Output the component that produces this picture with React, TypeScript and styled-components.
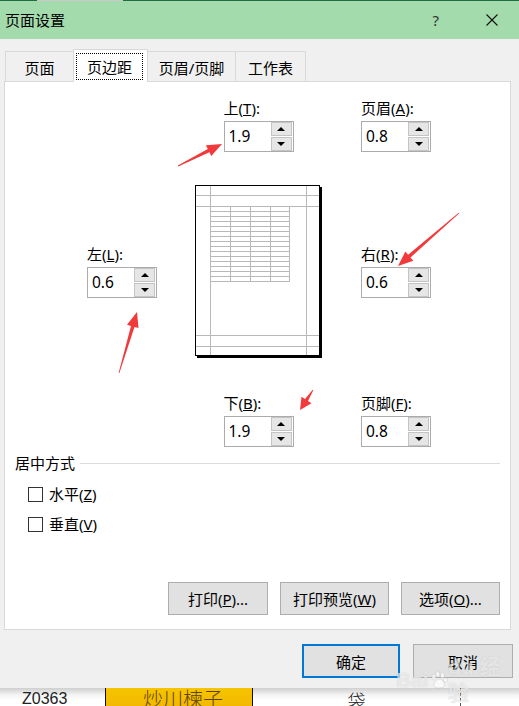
import styled, { createGlobalStyle, css } from "styled-components";

const GlobalStyle = createGlobalStyle`
  html, body { margin: 0; padding: 0; background: #fff; }
  body { font-family: "Noto Sans", "Noto Sans CJK SC", sans-serif; color: #000; }
  * { box-sizing: border-box; }
`;

type Side = "up" | "down";

const arrows = [
  { from: [178, 166], to: [222, 144] },
  { from: [119, 373], to: [137, 312] },
  { from: [459, 213], to: [398, 266] },
  { from: [313, 390], to: [300, 410] },
];

// tapered shaft + triangle head, like a marker arrow
const arrowPoints = (x1: number, y1: number, x2: number, y2: number) => {
  const dx = x2 - x1;
  const dy = y2 - y1;
  const len = Math.hypot(dx, dy);
  const ux = dx / len;
  const uy = dy / len;
  const nx = -uy;
  const ny = ux;
  const head = Math.min(15, len * 0.5);
  const bx = x2 - ux * head;
  const by = y2 - uy * head;
  const p = (x: number, y: number) => `${x.toFixed(1)},${y.toFixed(1)}`;
  return [
    p(x1 + nx * 0.4, y1 + ny * 0.4),
    p(bx + nx * 1.8, by + ny * 1.8),
    p(bx + nx * 6, by + ny * 6),
    p(x2, y2),
    p(bx - nx * 6, by - ny * 6),
    p(bx - nx * 1.8, by - ny * 1.8),
    p(x1 - nx * 0.4, y1 - ny * 0.4),
  ].join(" ");
};

const fields = {
  top: { label: "上", key: "T", value: "1.9" },
  header: { label: "页眉", key: "A", value: "0.8" },
  left: { label: "左", key: "L", value: "0.6" },
  right: { label: "右", key: "R", value: "0.6" },
  bottom: { label: "下", key: "B", value: "1.9" },
  footer: { label: "页脚", key: "F", value: "0.8" },
};

const Spin = ({ label, hotkey, value }: { label: string; hotkey: string; value: string }) => (
  <>
    <FieldLabel>
      {label}(<u>{hotkey}</u>):
    </FieldLabel>
    <SpinBox>
      <SpinValue>{value}</SpinValue>
      <Spinner>
        <SpinButton>
          <Tri $side="up" />
        </SpinButton>
        <SpinButton>
          <Tri $side="down" />
        </SpinButton>
      </Spinner>
    </SpinBox>
  </>
);

const PagePreview = () => {
  const rows = Array.from({ length: 16 }, (_, i) => 20 + i * 5);
  return (
    <Page>
      <svg width="123" height="169" viewBox="0 0 123 169" shapeRendering="crispEdges">
        <g stroke="#b8b8b8" strokeWidth="1">
          <line x1="14.5" y1="0" x2="14.5" y2="169" />
          <line x1="110.5" y1="0" x2="110.5" y2="169" />
          <line x1="0" y1="9.5" x2="123" y2="9.5" />
          <line x1="0" y1="20.5" x2="123" y2="20.5" />
          <line x1="0" y1="149.5" x2="123" y2="149.5" />
          <line x1="0" y1="160.5" x2="123" y2="160.5" />
          {rows.map((y) => (
            <line key={y} x1="14.5" y1={y + 0.5} x2="94" y2={y + 0.5} />
          ))}
          {[34.5, 54.5, 74.5, 93.5].map((x) => (
            <line key={x} x1={x} y1="20" x2={x} y2="96" />
          ))}
        </g>
      </svg>
    </Page>
  );
};

const App = () => {
  return (
    <Screen>
      <GlobalStyle />
      <TopEdge />
      <Dialog>
        <TitleBar>
          <Title>页面设置</Title>
          <HelpGlyph>?</HelpGlyph>
          <CloseIcon width="12" height="12" viewBox="0 0 12 12">
            <path d="M0.5 0.5 L11.5 11.5 M11.5 0.5 L0.5 11.5" stroke="#111" strokeWidth="1.1" fill="none" />
          </CloseIcon>
        </TitleBar>

        <Body>
          <Tabs>
            <Tab $w={69}>
              <TabText>页面</TabText>
            </Tab>
            <Tab $w={75} $active>
              <TabText $focus>页边距</TabText>
            </Tab>
            <Tab $w={89}>
              <TabText>页眉/页脚</TabText>
            </Tab>
            <Tab $w={71}>
              <TabText>工作表</TabText>
            </Tab>
          </Tabs>

          <Panel>
            <MarginsGrid>
              <Field $col={2} $row={1} $centerX>
                <Spin label={fields.top.label} hotkey={fields.top.key} value={fields.top.value} />
              </Field>
              <Field $col={3} $row={1}>
                <Spin label={fields.header.label} hotkey={fields.header.key} value={fields.header.value} />
              </Field>
              <Field $col={1} $row={2} $centerY>
                <Spin label={fields.left.label} hotkey={fields.left.key} value={fields.left.value} />
              </Field>
              <PreviewCell>
                <PagePreview />
              </PreviewCell>
              <Field $col={3} $row={2} $centerY>
                <Spin label={fields.right.label} hotkey={fields.right.key} value={fields.right.value} />
              </Field>
              <Field $col={2} $row={3} $centerX $shift>
                <Spin label={fields.bottom.label} hotkey={fields.bottom.key} value={fields.bottom.value} />
              </Field>
              <Field $col={3} $row={3} $shift>
                <Spin label={fields.footer.label} hotkey={fields.footer.key} value={fields.footer.value} />
              </Field>
            </MarginsGrid>

            <Section>
              <SectionHeader>
                居中方式
                <Rule />
              </SectionHeader>
              <CheckList>
                <CheckRow>
                  <CheckBox />
                  <span>
                    水平(<u>Z</u>)
                  </span>
                </CheckRow>
                <CheckRow>
                  <CheckBox />
                  <span>
                    垂直(<u>V</u>)
                  </span>
                </CheckRow>
              </CheckList>
            </Section>

            <ButtonRow>
              <ActionButton $w={100}>
                打印(<u>P</u>)...
              </ActionButton>
              <ActionButton $w={109}>
                打印预览(<u>W</u>)
              </ActionButton>
              <ActionButton $w={99}>
                选项(<u>O</u>)...
              </ActionButton>
            </ButtonRow>
          </Panel>

          <Footer>
            <DialogButton $w={98} $primary>
              确定
            </DialogButton>
            <DialogButton $w={100}>取消</DialogButton>
          </Footer>
        </Body>
      </Dialog>

      <Sheet>
        <CodeCell>Z0363</CodeCell>
        <NameCell>炒川楝子</NameCell>
        <UnitCell>袋</UnitCell>
        <RestCell />
      </Sheet>

      <Watermark>
        <WmMain>
          Bai
          <svg width="20" height="20" viewBox="0 0 20 20">
            <g fill="rgba(255,255,255,0.6)" stroke="rgba(150,150,150,0.3)" strokeWidth="0.8">
              <ellipse cx="5" cy="7" rx="2.2" ry="3" />
              <ellipse cx="9" cy="4" rx="2.2" ry="3" />
              <ellipse cx="14" cy="5" rx="2.2" ry="3" />
              <ellipse cx="17" cy="10" rx="2" ry="2.6" />
              <path d="M5 16 C5 11 9 9 11 9 C14 9 16 13 16 16 C16 19 5 19 5 16 Z" />
            </g>
          </svg>
          du 经验
        </WmMain>
        <WmSub>jingyan.baidu.com</WmSub>
      </Watermark>

      <Annotations width="519" height="706" viewBox="0 0 519 706">
        {arrows.map((a, i) => (
          <polygon key={i} points={arrowPoints(a.from[0], a.from[1], a.to[0], a.to[1])} fill="#f23a3c" />
        ))}
      </Annotations>
    </Screen>
  );
};

const Screen = styled.div`
  position: relative;
  width: 519px;
  height: 706px;
  overflow: hidden;
  display: flex;
  flex-direction: column;
`;

const TopEdge = styled.div`
  height: 1px;
  flex: none;
  background: linear-gradient(to right, #1f6e40 37px, #c9c9c9 37px, #c9c9c9 123px, #1f6e40 123px);
`;

const Dialog = styled.div`
  height: 687px;
  flex: none;
  display: flex;
  flex-direction: column;
  background: #f0f0f0;
`;

const TitleBar = styled.div`
  height: 38px;
  flex: none;
  display: flex;
  align-items: center;
  padding: 0 21px 0 5px;
  background: #a4dbad;
`;

const Title = styled.div`
  font-size: 15px;
  line-height: 20px;
`;

const HelpGlyph = styled.div`
  margin-left: auto;
  margin-right: 47px;
  font-size: 15px;
  line-height: 20px;
  color: #333;
`;

const CloseIcon = styled.svg`
  display: block;
`;

const Body = styled.div`
  flex: 1;
  display: flex;
  flex-direction: column;
  padding-top: 10px;
`;

const Tabs = styled.div`
  display: flex;
  align-items: flex-end;
  height: 32px;
  padding-left: 6px;
`;

const Tab = styled.div<{ $w: number; $active?: boolean }>`
  position: relative;
  width: ${(p) => p.$w}px;
  height: 30px;
  margin-left: -1px;
  display: flex;
  border: 1px solid #d9d9d9;
  border-bottom: none;
  background: #f0f0f0;
  font-size: 15px;
  ${(p) =>
    p.$active &&
    css`
      height: 33px;
      margin-bottom: -1px;
      z-index: 1;
      background: #fff;
    `}
`;

const TabText = styled.div<{ $focus?: boolean }>`
  flex: 1;
  display: flex;
  align-items: center;
  justify-content: center;
  padding-top: 2px;
  line-height: 20px;
  ${(p) =>
    p.$focus &&
    css`
      margin: 3px 4px 2px 2px;
      padding-top: 0;
      border: 1px dotted #000;
    `}
`;

const Panel = styled.div`
  height: 549px;
  margin: 0 8px 0 4px;
  display: flex;
  flex-direction: column;
  padding: 16px 10px 14px 10px;
  background: #fff;
  border: 1px solid #d9d9d9;
`;

const MarginsGrid = styled.div`
  display: grid;
  grid-template-columns: 69px 123px 69px;
  column-gap: 41px;
  row-gap: 34px;
  margin-left: 72px;
`;

const Field = styled.div<{ $col: number; $row: number; $centerX?: boolean; $centerY?: boolean; $shift?: boolean }>`
  grid-column: ${(p) => p.$col};
  grid-row: ${(p) => p.$row};
  width: 70px;
  justify-self: ${(p) => (p.$centerX ? "center" : "start")};
  align-self: ${(p) => (p.$centerY ? "center" : "start")};
  margin-top: ${(p) => (p.$shift ? 4 : 0)}px;
`;

const FieldLabel = styled.div`
  font-size: 15px;
  line-height: 20px;
  margin-bottom: 3px;
  white-space: nowrap;
`;

const SpinBox = styled.div`
  width: 70px;
  height: 31px;
  display: flex;
  padding-right: 1px;
  border: 1px solid #ababab;
  background: #fff;
`;

const SpinValue = styled.div`
  flex: 1;
  padding-left: 4px;
  font-size: 15.5px;
  line-height: 28px;
`;

const Spinner = styled.div`
  width: 21px;
  display: flex;
  flex-direction: column;
  gap: 1px;
`;

const SpinButton = styled.div`
  flex: 1;
  display: flex;
  align-items: center;
  justify-content: center;
  background: #e6e6e6;
  border: 1px solid #c4c4c4;
`;

const Tri = styled.div<{ $side: Side }>`
  width: 0;
  height: 0;
  border-left: 4px solid transparent;
  border-right: 4px solid transparent;
  ${(p) =>
    p.$side === "up"
      ? css`
          border-bottom: 4px solid #000;
        `
      : css`
          border-top: 4px solid #000;
        `}
`;

const PreviewCell = styled.div`
  grid-column: 2;
  grid-row: 2;
`;

const Page = styled.div`
  width: 123px;
  height: 169px;
  background: #fff;
  box-shadow: 0 0 0 1px #000, 2px 2px 0 1px #000;
  margin: 0 0 0 -1px;

  svg {
    display: block;
  }
`;

const Section = styled.div`
  margin-top: 6px;
`;

const SectionHeader = styled.div`
  display: flex;
  align-items: center;
  font-size: 15px;
  line-height: 20px;
  height: 20px;
`;

const Rule = styled.div`
  flex: 1;
  height: 1px;
  margin-left: 5px;
  background: #dcdcdc;
`;

const CheckList = styled.div`
  display: flex;
  flex-direction: column;
  gap: 10px;
  margin-top: 11px;
  padding-left: 13px;
`;

const CheckRow = styled.div`
  display: flex;
  align-items: center;
  gap: 6px;
  height: 20px;
  font-size: 15px;
  line-height: 20px;
`;

const CheckBox = styled.div`
  width: 15px;
  height: 15px;
  border: 1px solid #333;
  background: #fff;
`;

const ButtonRow = styled.div`
  margin-top: auto;
  display: flex;
  justify-content: flex-end;
  gap: 12px;
`;

const ActionButton = styled.div<{ $w: number }>`
  width: ${(p) => p.$w}px;
  height: 33px;
  display: flex;
  align-items: center;
  justify-content: center;
  background: #e1e1e1;
  border: 1px solid #adadad;
  font-size: 15px;
  white-space: nowrap;
`;

const Footer = styled.div`
  display: flex;
  justify-content: flex-end;
  gap: 13px;
  margin-top: 14px;
  padding-right: 6px;
`;

const DialogButton = styled.div<{ $w: number; $primary?: boolean }>`
  width: ${(p) => p.$w}px;
  height: 34px;
  display: flex;
  align-items: center;
  justify-content: center;
  background: #e1e1e1;
  border: ${(p) => (p.$primary ? "2px solid #0078d7" : "1px solid #adadad")};
  font-size: 15px;
`;

const Sheet = styled.div`
  flex: 1;
  display: flex;
  background: linear-gradient(#cfcfcf, #f4f4f4 7px, #fff 12px);
  overflow: hidden;
`;

const CodeCell = styled.div`
  width: 105px;
  padding: 2px 0 0 22px;
  font-family: "Liberation Sans", Arial, sans-serif;
  font-size: 16px;
  line-height: 18px;
  color: #222;
`;

const NameCell = styled.div`
  width: 148px;
  padding: 0 0 0 37px;
  background: linear-gradient(#f6c400, #f2b900);
  border-left: 1px solid #111;
  border-right: 1px solid #111;
  font-family: "Noto Sans CJK SC", sans-serif;
  font-weight: 300;
  font-size: 20px;
  line-height: 22px;
  color: #5e4300;
`;

const UnitCell = styled.div`
  width: 207px;
  text-align: center;
  font-family: "Noto Sans CJK SC", sans-serif;
  font-weight: 300;
  font-size: 18px;
  line-height: 24px;
  color: #222;
`;

const RestCell = styled.div`
  flex: 1;
  border-left: 1px dashed #555;
`;

const Watermark = styled.div`
  position: absolute;
  left: 396px;
  top: 654px;
  display: flex;
  flex-direction: column;
  pointer-events: none;
  color: rgba(255, 255, 255, 0.6);
  text-shadow: 0 0 1px rgba(120, 120, 120, 0.35);
`;

const WmMain = styled.div`
  display: flex;
  align-items: center;
  font-family: "Liberation Sans", Arial, "Noto Sans CJK SC", sans-serif;
  font-weight: bold;
  font-size: 21px;
  line-height: 26px;
`;

const WmSub = styled.div`
  font-family: "Liberation Sans", Arial, sans-serif;
  font-size: 12px;
  line-height: 14px;
  letter-spacing: 0.5px;
  margin-left: 2px;
`;

const Annotations = styled.svg`
  position: absolute;
  left: 0;
  top: 0;
  pointer-events: none;
`;

export default App;
